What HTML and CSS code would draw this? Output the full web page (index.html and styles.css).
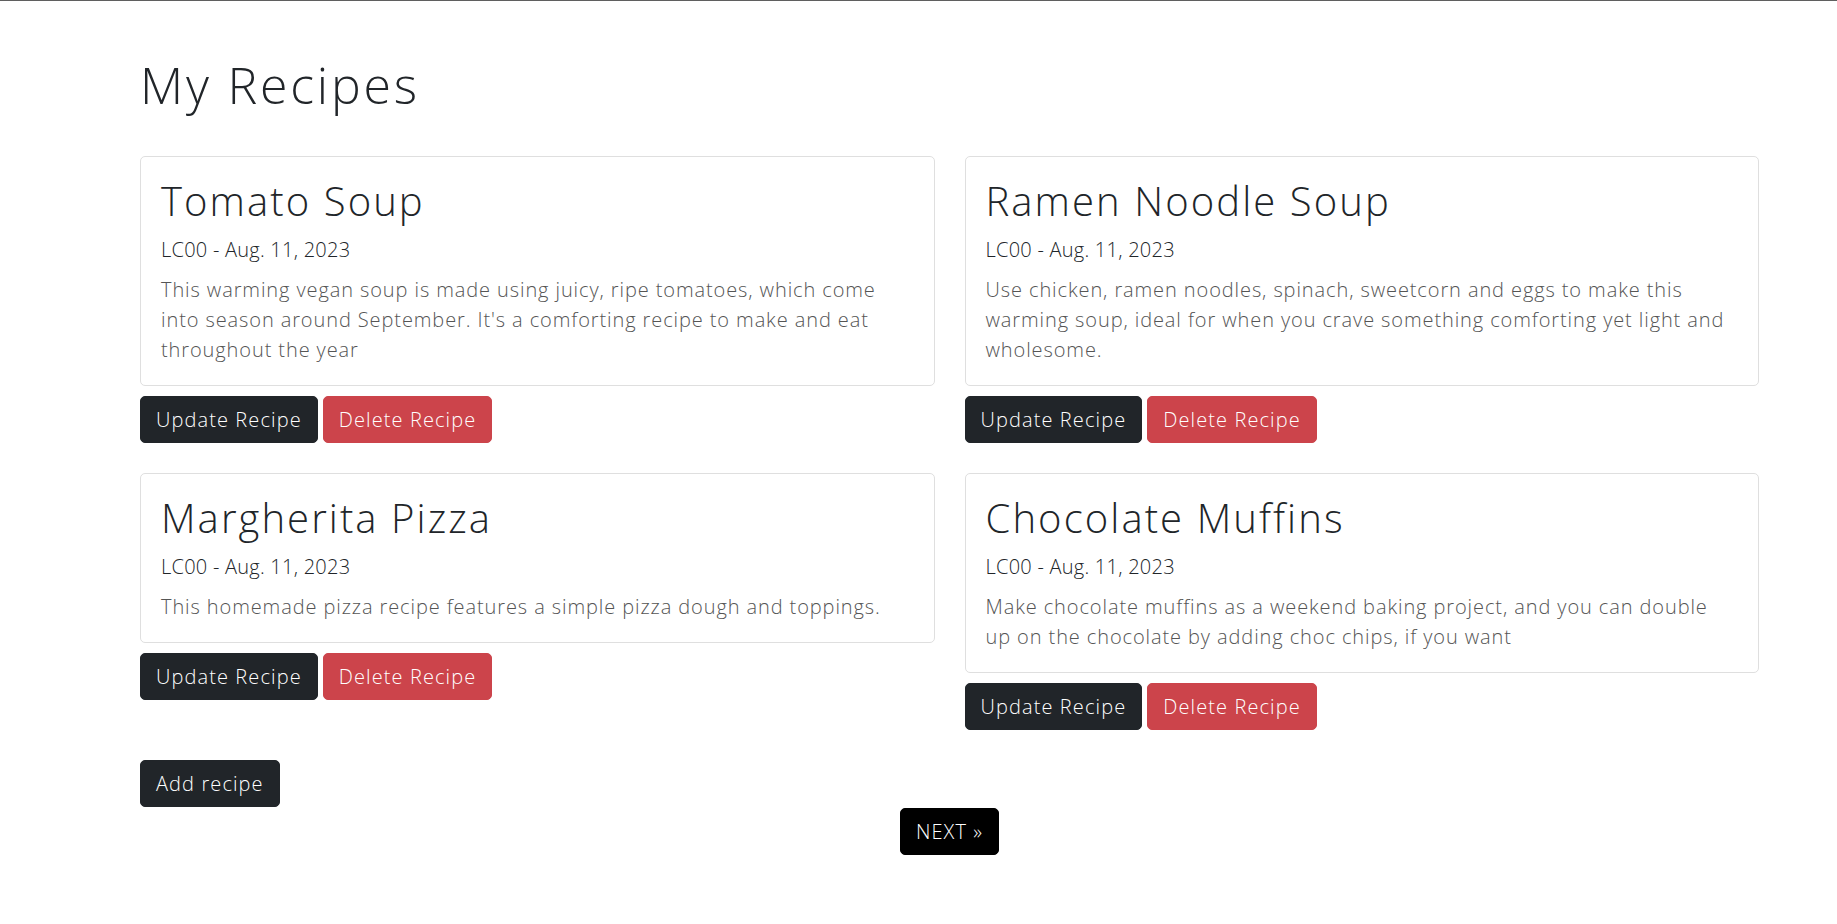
FILE: index.html
```html
<!DOCTYPE html>
<html lang="en">
<head>
<meta charset="utf-8">
<title>My Recipes</title>
<link rel="stylesheet" href="styles.css">
</head>
<body>
<main class="page">
  <h1 class="page-title">My Recipes</h1>
  <div class="recipe-grid">
    <div class="recipe">
      <article class="card">
        <h2 class="card-title">Tomato Soup</h2>
        <p class="card-meta">LC00 - Aug. 11, 2023</p>
        <p class="card-text">This warming vegan soup is made using juicy, ripe tomatoes, which come into season around September. It's a comforting recipe to make and eat throughout the year</p>
      </article>
      <div class="actions">
        <a class="btn btn-dark" href="#">Update Recipe</a>
        <a class="btn btn-danger" href="#">Delete Recipe</a>
      </div>
    </div>
    <div class="recipe">
      <article class="card">
        <h2 class="card-title">Ramen Noodle Soup</h2>
        <p class="card-meta">LC00 - Aug. 11, 2023</p>
        <p class="card-text">Use chicken, ramen noodles, spinach, sweetcorn and eggs to make this warming soup, ideal for when you crave something comforting yet light and wholesome.</p>
      </article>
      <div class="actions">
        <a class="btn btn-dark" href="#">Update Recipe</a>
        <a class="btn btn-danger" href="#">Delete Recipe</a>
      </div>
    </div>
    <div class="recipe">
      <article class="card">
        <h2 class="card-title">Margherita Pizza</h2>
        <p class="card-meta">LC00 - Aug. 11, 2023</p>
        <p class="card-text">This homemade pizza recipe features a simple pizza dough and toppings.</p>
      </article>
      <div class="actions">
        <a class="btn btn-dark" href="#">Update Recipe</a>
        <a class="btn btn-danger" href="#">Delete Recipe</a>
      </div>
    </div>
    <div class="recipe">
      <article class="card">
        <h2 class="card-title">Chocolate Muffins</h2>
        <p class="card-meta">LC00 - Aug. 11, 2023</p>
        <p class="card-text">Make chocolate muffins as a weekend baking project, and you can double up on the chocolate by adding choc chips, if you want</p>
      </article>
      <div class="actions">
        <a class="btn btn-dark" href="#">Update Recipe</a>
        <a class="btn btn-danger" href="#">Delete Recipe</a>
      </div>
    </div>
  </div>
  <a class="btn btn-dark" href="#">Add recipe</a>
  <nav class="pagination">
    <a class="btn btn-black" href="#">NEXT &raquo;</a>
  </nav>
</main>
</body>
</html>
```
FILE: styles.css
```css
* { box-sizing: border-box; }

html, body {
  margin: 0;
  padding: 0;
  background: #fff;
}

body {
  border-top: 1px solid #5f5f5f;
  font-family: "Open Sans", "Liberation Sans", sans-serif;
  font-weight: 300;
  font-size: 20px;
  line-height: 30px;
  color: #212529;
}

.page {
  width: 1619px;
  margin-left: 140px;
  padding-top: 54px;
}

.page-title {
  margin: 0 0 41px;
  font-size: 50px;
  line-height: 60px;
  font-weight: 300;
  letter-spacing: 0.056em;
  color: #212529;
}

.recipe-grid {
  display: grid;
  grid-template-columns: 1fr 1fr;
  column-gap: 30px;
  align-items: start;
}

.recipe {
  margin-bottom: 30px;
}

.card {
  border: 1px solid #dfdfdf;
  border-radius: 5px;
  padding: 20px;
  background: #fff;
}

.card-title {
  margin: 0 0 10px;
  font-size: 40px;
  line-height: 48px;
  font-weight: 300;
  letter-spacing: 0.052em;
  color: #212529;
}

.card-meta {
  margin: 0 0 10px;
  letter-spacing: 0.012em;
  color: #212529;
}

.card-text {
  margin: 0;
  letter-spacing: 0.045em;
  color: #555;
}

.actions {
  display: flex;
  gap: 5px;
  margin-top: 10px;
}

.btn {
  display: inline-block;
  padding: 7.5px 15px;
  border: 1px solid transparent;
  border-radius: 5px;
  font-size: 20px;
  line-height: 30px;
  font-weight: 300;
  letter-spacing: 0.055em;
  color: #fff;
  text-decoration: none;
}

.btn-dark {
  background: #212529;
  border-color: #212529;
}

.btn-danger {
  background: #cc444b;
  border-color: #cc444b;
}

.btn-black {
  background: #000;
  border-color: #000;
}

.pagination {
  display: flex;
  justify-content: center;
  margin-top: 1px;
}
```
